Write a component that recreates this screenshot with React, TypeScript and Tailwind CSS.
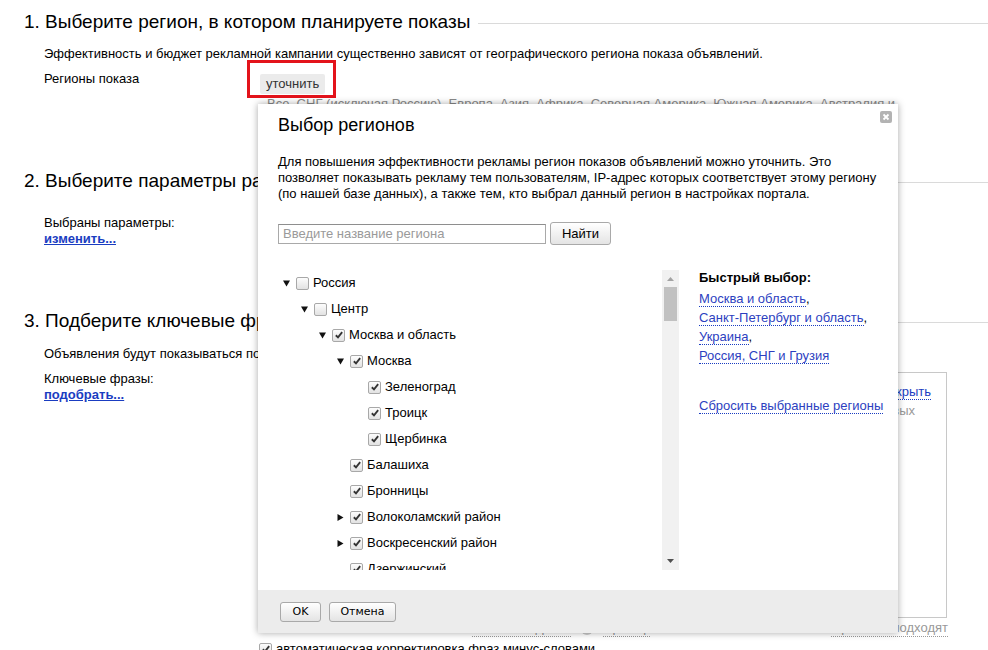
import React from 'react';

type Node = { label: string; level: number; arrow?: 'down' | 'right'; checked: boolean };

const tree: Node[] = [
  { label: 'Россия', level: 0, arrow: 'down', checked: false },
  { label: 'Центр', level: 1, arrow: 'down', checked: false },
  { label: 'Москва и область', level: 2, arrow: 'down', checked: true },
  { label: 'Москва', level: 3, arrow: 'down', checked: true },
  { label: 'Зеленоград', level: 4, checked: true },
  { label: 'Троицк', level: 4, checked: true },
  { label: 'Щербинка', level: 4, checked: true },
  { label: 'Балашиха', level: 3, checked: true },
  { label: 'Бронницы', level: 3, checked: true },
  { label: 'Волоколамский район', level: 3, arrow: 'right', checked: true },
  { label: 'Воскресенский район', level: 3, arrow: 'right', checked: true },
  { label: 'Дзержинский', level: 3, checked: true },
  { label: 'Дмитровский район', level: 3, arrow: 'right', checked: true },
];

const indent = ['pl-[5px]', 'pl-[23px]', 'pl-[41px]', 'pl-[59px]', 'pl-[77px]'];

function Checkbox({ checked }: { checked: boolean }) {
  return (
    <span className="inline-flex h-[13px] w-[13px] shrink-0 items-center justify-center rounded-[2px] border border-[#a8a8a8] bg-gradient-to-b from-[#fdfdfd] to-[#e2e2e2]">
      {checked && (
        <svg viewBox="0 0 12 12" className="h-[10px] w-[10px]">
          <path d="M2.2 6.3 L4.8 8.9 L9.8 2.6" stroke="#333" strokeWidth="2.2" fill="none" />
        </svg>
      )}
    </span>
  );
}

function Arrow({ dir }: { dir?: 'down' | 'right' }) {
  return (
    <span className="flex w-[13px] shrink-0 items-center">
      {dir === 'down' && (
        <svg width="7" height="7" viewBox="0 0 7 7">
          <path d="M0 0.5 H7 L3.5 6.5 Z" fill="#111" />
        </svg>
      )}
      {dir === 'right' && (
        <svg width="7" height="7" viewBox="0 0 7 7">
          <path d="M0.5 0 V7 L6.5 3.5 Z" fill="#111" />
        </svg>
      )}
    </span>
  );
}

function Heading({ text }: { text: string }) {
  return (
    <div className="flex items-center">
      <h2 className="whitespace-nowrap text-[19px] leading-[24px] font-normal">{text}</h2>
      <div className="mt-[3px] ml-[8px] h-px flex-1 bg-[#dadada]" />
    </div>
  );
}

export default function App() {
  return (
    <div className="relative h-[650px] w-[988px] overflow-hidden bg-white text-[13px] text-black font-['Liberation_Sans',Arial,sans-serif]">
      {/* 1 */}
      <section className="pl-[24px] pt-[10px]">
        <Heading text="1. Выберите регион, в котором планируете показы" />
        <p className="mt-[12px] ml-[20px] leading-[16px]">
          Эффективность и бюджет рекламной кампании существенно зависят от географического региона показа объявлений.
        </p>
        <div className="mt-[-2px] flex">
          <div className="ml-[20px] w-[203px] pt-[11px] leading-[16px]">Регионы показа</div>
          <div>
            <div className="h-[38px] w-[89px] border-[3px] border-[#e3131b] pl-[10px] pt-[11px]">
              <button className="h-[20px] rounded-[2px] bg-[#ebebeb] px-[6px] leading-[20px] text-[#333]">уточнить</button>
            </div>
            <div className="mt-[-2px] whitespace-nowrap pl-[20px] leading-[16px] text-[#8a8a8a]">
              Все, СНГ (исключая Россию), Европа, Азия, Африка, Северная Америка, Южная Америка, Австралия и
            </div>
          </div>
        </div>
      </section>

      {/* 2 */}
      <section className="mt-[57px] pl-[24px]">
        <Heading text="2. Выберите параметры размещения" />
        <div className="mt-[22px] ml-[20px] leading-[16px]">
          <div>Выбраны параметры:</div>
          <a className="font-bold text-[#1a3dc1] underline">изменить...</a>
        </div>
      </section>

      {/* 3 */}
      <section className="mt-[62px] pl-[24px]">
        <Heading text="3. Подберите ключевые фразы" />
        <p className="mt-[13px] ml-[20px] leading-[16px]">
          Объявления будут показываться по ключевым фразам, которые вы укажете.
        </p>
        <div className="mt-[9px] flex">
          <div className="ml-[20px] w-[214px] leading-[16px]">
            <div>Ключевые фразы:</div>
            <a className="font-bold text-[#1a3dc1] underline">подобрать...</a>
          </div>
          <div>
            <div className="mt-[1px] h-[246px] w-[689px] border border-[#c8c8c8] pt-[9px] pr-[15px] text-right leading-[19px]">
              <div>
                <span className="text-[#1a3dc1] border-b border-dotted border-[#1a3dc1]">Показать / скрыть</span>
              </div>
              <div className="pr-[16px] text-[#999]">Нет похожих или новых</div>
            </div>
            <div className="mt-[2px] flex w-[690px] items-center justify-between leading-[16px]">
              <span className="pl-[4px] text-[#999]">1000</span>
              <span className="flex items-center gap-[10px] text-[#999]">
                <span className="border-b border-dotted border-[#999]">Показать фразы</span>
                <span className="h-[12px] w-[12px] rounded-full bg-[#ccc]" />
                <span className="border-b border-dotted border-[#999]">Пример</span>
              </span>
              <span className="border-b border-dotted border-[#999] text-[#999]">Фразы не подходят</span>
            </div>
            <div className="mt-[4px] flex items-center gap-[4px] pl-[1px] leading-[16px]">
              <Checkbox checked />
              <span>автоматическая корректировка фраз минус-словами</span>
            </div>
          </div>
        </div>
      </section>

      {/* modal */}
      <div className="absolute left-[258px] top-[104px] flex h-[529px] w-[640px] flex-col bg-white shadow-[0_0_7px_rgba(0,0,0,0.35)]">
        <button className="absolute right-[6px] top-[7px] flex h-[12px] w-[12px] items-center justify-center rounded-[2px] bg-[#b3b3b3]">
          <svg width="8" height="8" viewBox="0 0 8 8">
            <path d="M1.5 1.5 L6.5 6.5 M6.5 1.5 L1.5 6.5" stroke="#fff" strokeWidth="1.8" />
          </svg>
        </button>
        <div className="px-[20px] pt-[10px]">
          <div className="text-[18px] leading-[22px]">Выбор регионов</div>
          <p className="mt-[18px] leading-[16px]">
            Для повышения эффективности рекламы регион показов объявлений можно уточнить. Это
            <br />
            позволяет показывать рекламу тем пользователям, IP-адрес которых соответствует этому региону
            <br />
            (по нашей базе данных), а также тем, кто выбрал данный регион в настройках портала.
          </p>
          <div className="mt-[20px] flex items-center gap-[4px]">
            <input
              placeholder="Введите название региона"
              className="h-[20px] w-[268px] border border-[#a9a9a9] border-t-[#8e8e8e] px-[4px] text-[13px] text-black placeholder:text-[#9a9a9a] outline-none"
            />
            <button className="h-[23px] w-[61px] rounded-[3px] border border-[#a9a9a9] bg-gradient-to-b from-white to-[#e4e4e4] text-[13px]">
              Найти
            </button>
          </div>
          <div className="mt-[25px] flex h-[300px]">
            <div className="h-[300px] w-[384px] shrink-0 overflow-hidden">
              {tree.map((n, i) => (
                <div key={i} className={`flex h-[26px] items-center ${indent[n.level]}`}>
                  <Arrow dir={n.arrow} />
                  <Checkbox checked={n.checked} />
                  <span className="ml-[4px] whitespace-nowrap">{n.label}</span>
                </div>
              ))}
            </div>
            <div className="flex h-[300px] w-[17px] shrink-0 flex-col items-center bg-[#f1f1f1]">
              <svg width="7" height="4" viewBox="0 0 7 4" className="mt-[7px]">
                <path d="M0 4 L3.5 0 L7 4 Z" fill="#a3a3a3" />
              </svg>
              <div className="mt-[6px] h-[34px] w-[13px] bg-[#c1c1c1]" />
              <div className="flex-1" />
              <svg width="7" height="4" viewBox="0 0 7 4" className="mb-[7px]">
                <path d="M0 0 L3.5 4 L7 0 Z" fill="#505050" />
              </svg>
            </div>
            <div className="ml-[20px] whitespace-nowrap leading-[19px]">
              <div className="font-bold leading-[16px]">Быстрый выбор:</div>
              <div className="mt-[3px]">
                <div>
                  <span className="border-b border-dotted border-[#1a3dc1] text-[#2d3fbf]">Москва и область</span>,
                </div>
                <div>
                  <span className="border-b border-dotted border-[#1a3dc1] text-[#2d3fbf]">Санкт-Петербург и область</span>,
                </div>
                <div>
                  <span className="border-b border-dotted border-[#1a3dc1] text-[#2d3fbf]">Украина</span>,
                </div>
                <div>
                  <span className="border-b border-dotted border-[#1a3dc1] text-[#2d3fbf]">Россия, СНГ и Грузия</span>
                </div>
              </div>
              <div className="mt-[31px]">
                <span className="border-b border-dotted border-[#1a3dc1] text-[#2d3fbf]">Сбросить выбранные регионы</span>
              </div>
            </div>
          </div>
        </div>
        <div className="mt-auto flex h-[43px] items-start gap-[8px] bg-[#ececec] pl-[22px] pt-[12px] font-['DejaVu_Sans',Verdana,sans-serif] text-[11px]">
          <button className="h-[20px] w-[41px] rounded-[3px] border border-[#a9a9a9] bg-gradient-to-b from-white to-[#e4e4e4]">OK</button>
          <button className="h-[20px] w-[67px] rounded-[3px] border border-[#a9a9a9] bg-gradient-to-b from-white to-[#e4e4e4]">Отмена</button>
        </div>
      </div>
    </div>
  );
}
